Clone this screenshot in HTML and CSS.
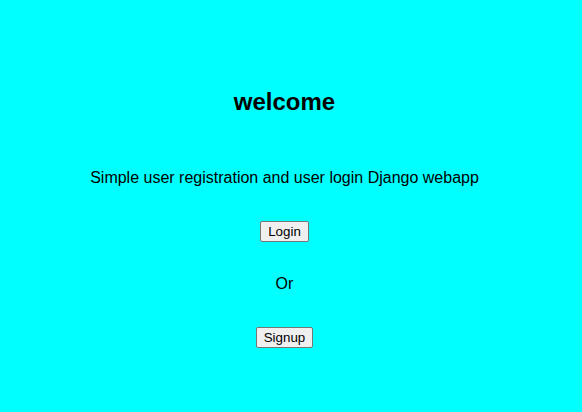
FILE: index.html
```html
<!DOCTYPE html>
<html>
<head>
<meta charset="utf-8">
<link rel="stylesheet" href="styles.css">
</head>
<body>
<main class="page">
  <h1 class="title">welcome</h1>
  <p class="lead">Simple user registration and user login Django webapp</p>
  <button class="btn">Login</button>
  <p class="or">Or</p>
  <button class="btn">Signup</button>
</main>
</body>
</html>
```
FILE: styles.css
```css
html, body {
  margin: 0;
  padding: 0;
  background: #00ffff;
  height: 100%;
}
body {
  font-family: "Liberation Sans", Arial, sans-serif;
  color: #000;
}
.page {
  width: 569px;
  display: flex;
  flex-direction: column;
  align-items: center;
  padding-top: 88px;
}
.title {
  margin: 0;
  font-size: 24px;
  line-height: 28px;
  font-weight: bold;
}
.lead {
  margin: 53px 0 0;
  font-size: 16px;
  line-height: 18px;
}
.or {
  margin: 33px 0 0;
  font-size: 16px;
  line-height: 18px;
}
.btn {
  margin-top: 34px;
  font-family: "Liberation Sans", Arial, sans-serif;
  font-size: 13.333px;
  line-height: 17px;
  height: 21px;
  padding: 1px 7px;
  background: #efefef;
  border: 1px solid #767676;
  border-radius: 2px;
  color: #000;
  box-sizing: border-box;
}
```
